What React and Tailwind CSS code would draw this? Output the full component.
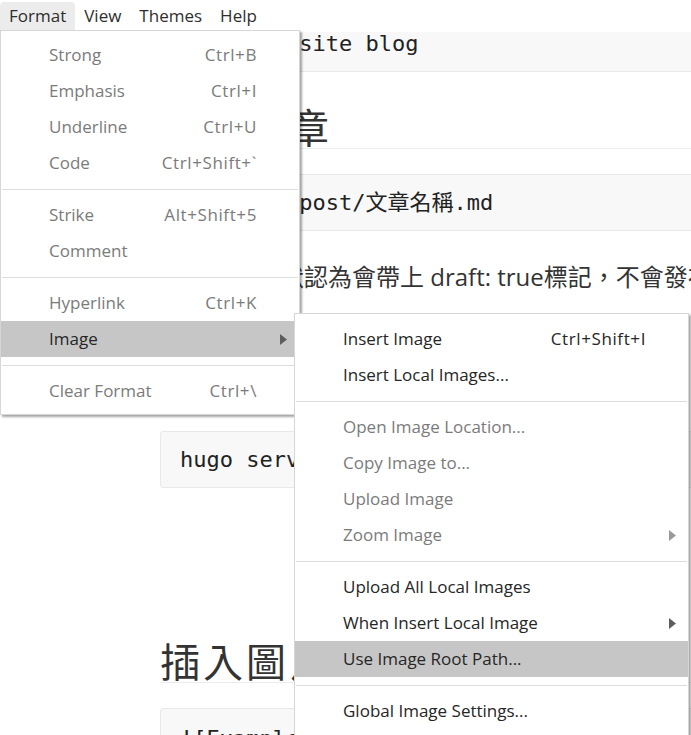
import clsx from 'clsx'

const formatItems = [
  { label: 'Strong', keys: 'Ctrl+B' },
  { label: 'Emphasis', keys: 'Ctrl+I' },
  { label: 'Underline', keys: 'Ctrl+U' },
  { label: 'Code', keys: 'Ctrl+Shift+`' },
  'sep',
  { label: 'Strike', keys: 'Alt+Shift+5' },
  { label: 'Comment' },
  'sep',
  { label: 'Hyperlink', keys: 'Ctrl+K' },
  { label: 'Image', sub: true, active: true },
  'sep',
  { label: 'Clear Format', keys: 'Ctrl+\\' },
]

const imageItems = [
  { label: 'Insert Image', keys: 'Ctrl+Shift+I', on: true },
  { label: 'Insert Local Images...', on: true },
  'sep',
  { label: 'Open Image Location...' },
  { label: 'Copy Image to...' },
  { label: 'Upload Image' },
  { label: 'Zoom Image', sub: true },
  'sep',
  { label: 'Upload All Local Images', on: true },
  { label: 'When Insert Local Image', sub: true, on: true },
  { label: 'Use Image Root Path...', on: true, active: true },
  'sep',
  { label: 'Global Image Settings...', on: true },
]

const Arrow = ({ dim }) => (
  <svg width="7" height="11" viewBox="0 0 7 11">
    <path d="M0 0 L7 5.5 L0 11 Z" fill={dim ? '#9a9a9a' : '#5e5e5e'} />
  </svg>
)

const MenuRow = ({ item }) => {
  if (item === 'sep') {
    return (
      <div className="flex h-4 items-center px-px">
        <div className="h-px w-full bg-[#dddddd]" />
      </div>
    )
  }
  const enabled = item.on || item.active
  return (
    <div
      className={clsx(
        'flex h-9 items-center pl-12',
        item.active && 'bg-[#c6c6c6]',
        enabled ? 'text-[#262626]' : 'text-[#7b7b7b]'
      )}
    >
      <span className="flex-1 whitespace-nowrap">{item.label}</span>
      <span className="whitespace-nowrap tracking-[0.6px]">{item.keys}</span>
      <span className="flex w-[42px] justify-end pr-3">
        {item.sub && <Arrow dim={!enabled} />}
      </span>
    </div>
  )
}

const CodeBlock = ({ children, className }) => (
  <div
    className={clsx(
      'flex h-[57px] w-[640px] items-center rounded-[3px] border border-[#e6e9ec] bg-[#f8f8f8] pl-[19px] font-["DejaVu_Sans_Mono","Noto_Sans_CJK_TC",monospace] text-[22px] whitespace-pre text-[#222]',
      className
    )}
  >
    {children}
  </div>
)

const Heading = ({ children, className }) => (
  <h2
    className={clsx(
      'w-[640px] border-b border-[#ececec] font-["Noto_Sans_CJK_TC",sans-serif] text-[40px] leading-[44px] tracking-[3px] text-[#333]',
      className
    )}
  >
    {children}
  </h2>
)

export default function App() {
  return (
    <div className='relative flex h-[735px] w-[691px] flex-col overflow-hidden bg-white font-["Open_Sans","Noto_Sans_CJK_TC",sans-serif] text-[17px]'>
      {/* menubar */}
      <div className="flex h-8 shrink-0 items-start pt-[2px] text-[#2e2e2e]">
        {['Format', 'View', 'Themes', 'Help'].map((m) => (
          <div
            key={m}
            className={clsx(
              'flex h-7 items-center px-[9px] rounded-t-[4px]',
              m === 'Format' && 'bg-[#ececec]'
            )}
          >
            {m}
          </div>
        ))}
      </div>

      {/* document, scrolled */}
      <div className="flex-1 overflow-hidden">
        <div className="-mt-[17px] pl-[160px]">
          <CodeBlock>hugo new site blog</CodeBlock>
          <Heading className="mt-8">新增文章</Heading>
          <CodeBlock className="mt-[25px]">hugo new post/文章名稱.md</CodeBlock>
          <p className="mt-[31px] w-[640px] whitespace-nowrap text-[24px] leading-[30px] text-[#333]">
            新建文章時默認為會帶上 draft: true標記，不會發布
          </p>
          <p className="mt-10 text-[18px] leading-[30px] text-[#333]">預覽草稿：</p>
          <CodeBlock className="mt-[69px] h-[56px]">hugo server -D</CodeBlock>
          <Heading className="mt-[150px]">插入圖片</Heading>
          <CodeBlock className="mt-[25px] h-[60px]">![Example](/images/example.png)</CodeBlock>
        </div>
      </div>

      {/* Format menu */}
      <div className="absolute left-0 top-[30px] w-[300px] border border-[#d6d6d6] bg-white pt-[6px] pb-[5px] shadow-[2px_2px_2px_rgba(0,0,0,0.35)]">
        {formatItems.map((item, i) => (
          <MenuRow key={i} item={item} />
        ))}
      </div>

      {/* Image submenu */}
      <div className="absolute left-[294px] top-[313px] w-[395px] border border-[#d6d6d6] bg-white pt-[7px] pb-[6px] shadow-[2px_2px_2px_rgba(0,0,0,0.35)]">
        {imageItems.map((item, i) => (
          <MenuRow key={i} item={item} />
        ))}
      </div>
    </div>
  )
}
